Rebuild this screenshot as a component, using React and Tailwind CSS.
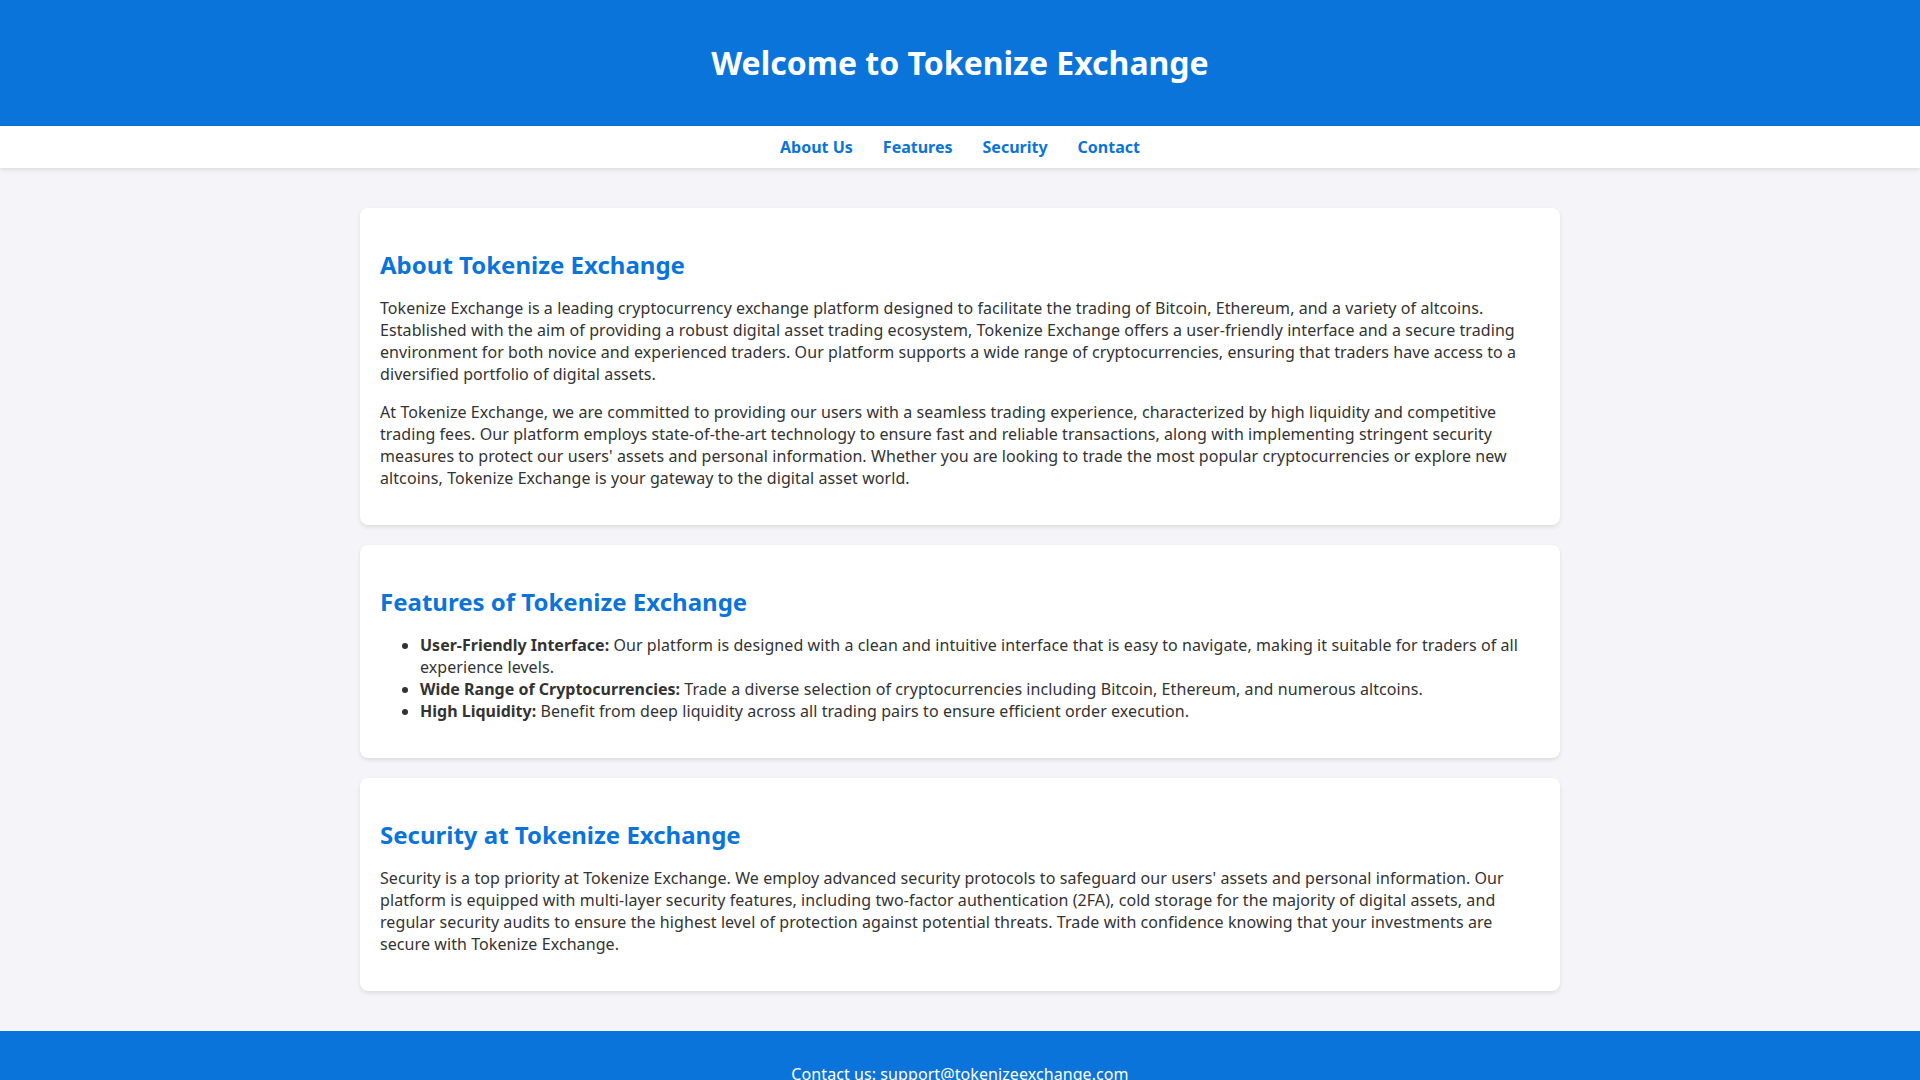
import React from 'react';

const font = { fontFamily: '"Noto Sans", "Open Sans", sans-serif' };

function Card({ title, children }) {
  return (
    <section className="bg-white rounded-lg shadow-[0_2px_4px_rgba(0,0,0,0.1)] p-5">
      <h2 className="text-[24px] font-bold leading-[normal] text-[#0a74da] mt-[19.92px] mb-4">{title}</h2>
      {children}
    </section>
  );
}

export default function App() {
  return (
    <div style={font} className="min-h-screen bg-[#f4f4f9] text-[#333] text-base leading-[normal]">
      <header className="bg-[#0a74da] text-white text-center p-5">
        <h1 className="text-[32px] font-bold leading-[normal] my-[21.44px]">Welcome to Tokenize Exchange</h1>
      </header>

      <nav className="bg-white shadow-[0_2px_4px_rgba(0,0,0,0.1)] py-2.5 flex justify-center">
        {['About Us', 'Features', 'Security', 'Contact'].map((l) => (
          <a key={l} href="#" className="mx-[15px] font-bold text-[#0a74da]">{l}</a>
        ))}
      </nav>

      <main className="max-w-[1200px] mx-auto py-10 flex flex-col gap-5">
        <Card title="About Tokenize Exchange">
          <p className="my-4 tracking-[0.08px]">
            Tokenize Exchange is a leading cryptocurrency exchange platform designed to facilitate the trading of Bitcoin, Ethereum, and a variety of altcoins. Established with the aim of providing a robust digital asset trading ecosystem, Tokenize Exchange offers a user-friendly interface and a secure trading environment for both novice and experienced traders. Our platform supports a wide range of cryptocurrencies, ensuring that traders have access to a diversified portfolio of digital assets.
          </p>
          <p className="my-4 tracking-[0.08px]">
            At Tokenize Exchange, we are committed to providing our users with a seamless trading experience, characterized by high liquidity and competitive trading fees. Our platform employs state-of-the-art technology to ensure fast and reliable transactions, along with implementing stringent security measures to protect our users' assets and personal information. Whether you are looking to trade the most popular cryptocurrencies or explore new altcoins, Tokenize Exchange is your gateway to the digital asset world.
          </p>
        </Card>

        <Card title="Features of Tokenize Exchange">
          <ul className="list-disc pl-10 my-4 tracking-[0.08px]">
            <li><strong className="tracking-normal">User-Friendly Interface:</strong> Our platform is designed with a clean and intuitive interface that is easy to navigate, making it suitable for traders of all experience levels.</li>
            <li><strong className="tracking-normal">Wide Range of Cryptocurrencies:</strong> Trade a diverse selection of cryptocurrencies including Bitcoin, Ethereum, and numerous altcoins.</li>
            <li><strong className="tracking-normal">High Liquidity:</strong> Benefit from deep liquidity across all trading pairs to ensure efficient order execution.</li>
          </ul>
        </Card>

        <Card title="Security at Tokenize Exchange">
          <p className="my-4 tracking-[0.08px]">
            Security is a top priority at Tokenize Exchange. We employ advanced security protocols to safeguard our users' assets and personal information. Our platform is equipped with multi-layer security features, including two-factor authentication (2FA), cold storage for the majority of digital assets, and regular security audits to ensure the highest level of protection against potential threats. Trade with confidence knowing that your investments are secure with Tokenize Exchange.
          </p>
        </Card>
      </main>

      <footer className="bg-[#0a74da] text-white text-center p-4">
        <p className="my-4 tracking-[0.08px]">Contact us: support@tokenizeexchange.com</p>
      </footer>
    </div>
  );
}
